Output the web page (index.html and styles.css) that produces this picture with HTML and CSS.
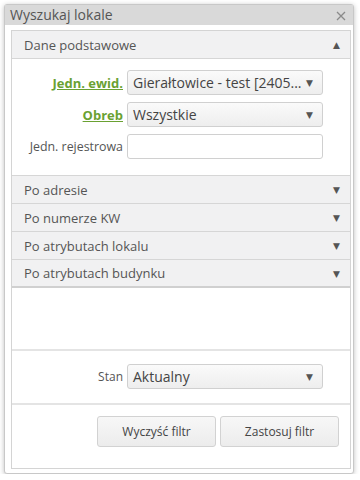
FILE: index.html
```html
<!DOCTYPE html>
<html lang="pl">
<head>
<meta charset="utf-8">
<link rel="stylesheet" href="styles.css">
</head>
<body>
<div class="window">
  <div class="titlebar">
    <span class="title">Wyszukaj lokale</span>
    <svg class="close" width="10" height="10" viewBox="0 0 10 10"><path d="M1 1 L9 9 M9 1 L1 9" stroke="#8a8a8a" stroke-width="1.3" fill="none"/></svg>
  </div>
  <div class="wbody">
    <div class="panel">
      <div class="acc-head open"><span>Dane podstawowe</span><span class="arrow">▲</span></div>
      <div class="acc-content">
        <div class="row">
          <label class="lbl link">Jedn. ewid.</label>
          <div class="select"><span>Gierałtowice - test [2405...</span><span class="arrow">▼</span></div>
        </div>
        <div class="row">
          <label class="lbl link">Obreb</label>
          <div class="select"><span>Wszystkie</span><span class="arrow">▼</span></div>
        </div>
        <div class="row">
          <label class="lbl">Jedn. rejestrowa</label>
          <div class="input"></div>
        </div>
      </div>
      <div class="acc-head"><span>Po adresie</span><span class="arrow">▼</span></div>
      <div class="acc-head"><span>Po numerze KW</span><span class="arrow">▼</span></div>
      <div class="acc-head"><span>Po atrybutach lokalu</span><span class="arrow">▼</span></div>
      <div class="acc-head last"><span>Po atrybutach budynku</span><span class="arrow">▼</span></div>
      <div class="spacer"></div>
      <div class="stan">
        <div class="row">
          <label class="lbl small">Stan</label>
          <div class="select"><span>Aktualny</span><span class="arrow">▼</span></div>
        </div>
      </div>
      <div class="buttons">
        <button class="btn">Wyczyść filtr</button>
        <button class="btn">Zastosuj filtr</button>
      </div>
    </div>
  </div>
</div>
</body>
</html>
```
FILE: styles.css
```css
* { box-sizing: border-box; }
body {
  margin: 0;
  background: #fff;
  font-family: "Open Sans", "DejaVu Sans", sans-serif;
  color: #444;
}
.window {
  margin: 4px 0 0 4px;
  width: 350px;
  height: 470px;
  border: 1px solid #c8c8c8;
  border-radius: 3px;
  box-shadow: 0 1px 5px rgba(0,0,0,0.25);
  background: #fff;
  display: flex;
  flex-direction: column;
}
.titlebar {
  height: 20px;
  background: #d9d9d9;
  display: flex;
  align-items: center;
  justify-content: space-between;
  padding: 0 7px 0 5px;
}
.title { font-size: 14px; color: #555; line-height: 20px; }
.close { display: block; margin-top: 2px; }
.wbody {
  flex: 1;
  padding: 5px 2px 4px 6px;
  display: flex;
}
.panel {
  flex: 1;
  border: 1px solid #d4d4d4;
  display: flex;
  flex-direction: column;
}
.acc-head {
  height: 28px;
  background: #f1f1f2;
  border-bottom: 1px solid #d6d6d6;
  display: flex;
  align-items: center;
  justify-content: space-between;
  padding: 0 10px 0 12px;
  font-size: 13px;
  color: #555;
}
.acc-head .arrow { font-size: 9px; color: #555; }
.acc-head.last { border-bottom: 2px solid #d0d0d0; }
.acc-content {
  padding: 11px 0 16px 0;
  border-bottom: 1px solid #d6d6d6;
  display: flex;
  flex-direction: column;
  gap: 7px;
}
.row {
  display: flex;
  align-items: center;
  gap: 4px;
}
.lbl {
  width: 111px;
  text-align: right;
  font-size: 12.4px;
  color: #555;
}
.lbl.link {
  font-size: 13px;
  color: #6aa132;
  font-weight: bold;
  text-decoration: underline;
}
.select, .input {
  width: 196px;
  height: 25px;
  border: 1px solid #d0d0d0;
  border-radius: 3px;
  background: linear-gradient(#fafafa, #eeeeee);
  display: flex;
  align-items: center;
  justify-content: space-between;
  padding: 0 9px 0 5px;
  font-size: 14px;
  color: #444;
}
.select .arrow { font-size: 9px; color: #555; }
.input { background: #fff; }
.spacer {
  height: 63px;
  border-bottom: 2px solid #e4e4e4;
}
.stan {
  height: 54px;
  padding-top: 13px;
  border-bottom: 2px solid #e4e4e4;
}
.lbl.small { font-size: 12px; }
.buttons {
  flex: 1;
  display: flex;
  justify-content: flex-end;
  gap: 4px;
  padding: 11px 11px 0 0;
}
.btn {
  width: 119px;
  height: 31px;
  border: 1px solid #d2d2d2;
  border-radius: 3px;
  background: linear-gradient(#f7f7f7, #ececec);
  font-family: "Open Sans", "DejaVu Sans", sans-serif;
  font-size: 12px;
  color: #444;
}
```
